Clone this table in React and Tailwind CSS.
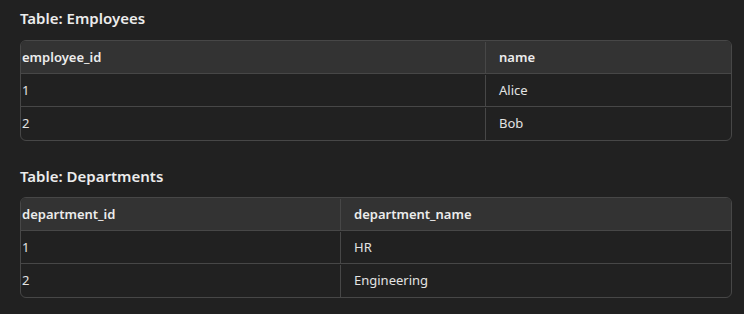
import React from "react";

function DataTable({ cols, rows, firstW }) {
  return (
    <div className="w-[712px] rounded-[6px] border border-[#474747] overflow-hidden">
      <div className="flex h-[33px] pt-px bg-[#333333] border-b border-[#474747] font-semibold text-[13px] text-[#ececec]">
        <div className="flex items-center pl-px border-r border-[#474747]" style={{ width: firstW }}>{cols[0]}</div>
        <div className="flex items-center pl-[13px] flex-1">{cols[1]}</div>
      </div>
      {rows.map((r, i) => (
        <div key={i} className={`flex h-[33px] pt-px text-[13px] text-[#e3e3e3] ${i < rows.length - 1 ? "border-b border-[#474747]" : "h-[32px]"}`}>
          <div className="flex items-center pl-px border-r border-[#474747]" style={{ width: firstW }}>{r[0]}</div>
          <div className="flex items-center pl-[13px] flex-1">{r[1]}</div>
        </div>
      ))}
    </div>
  );
}

export default function App() {
  return (
    <div className="w-[744px] h-[314px] bg-[#212121] pl-[20px] pt-[6px] font-['Segoe_UI','Noto_Sans',sans-serif]">
      <div className="h-[24px] flex items-center text-[15px] font-semibold text-[#ececec]">Table: Employees</div>
      <div className="mt-[10px]">
        <DataTable firstW={465} cols={["employee_id", "name"]} rows={[["1", "Alice"], ["2", "Bob"]]} />
      </div>
      <div className="mt-[23px] h-[24px] flex items-center text-[15px] font-semibold text-[#ececec]">Table: Departments</div>
      <div className="mt-[9px]">
        <DataTable firstW={320} cols={["department_id", "department_name"]} rows={[["1", "HR"], ["2", "Engineering"]]} />
      </div>
    </div>
  );
}
